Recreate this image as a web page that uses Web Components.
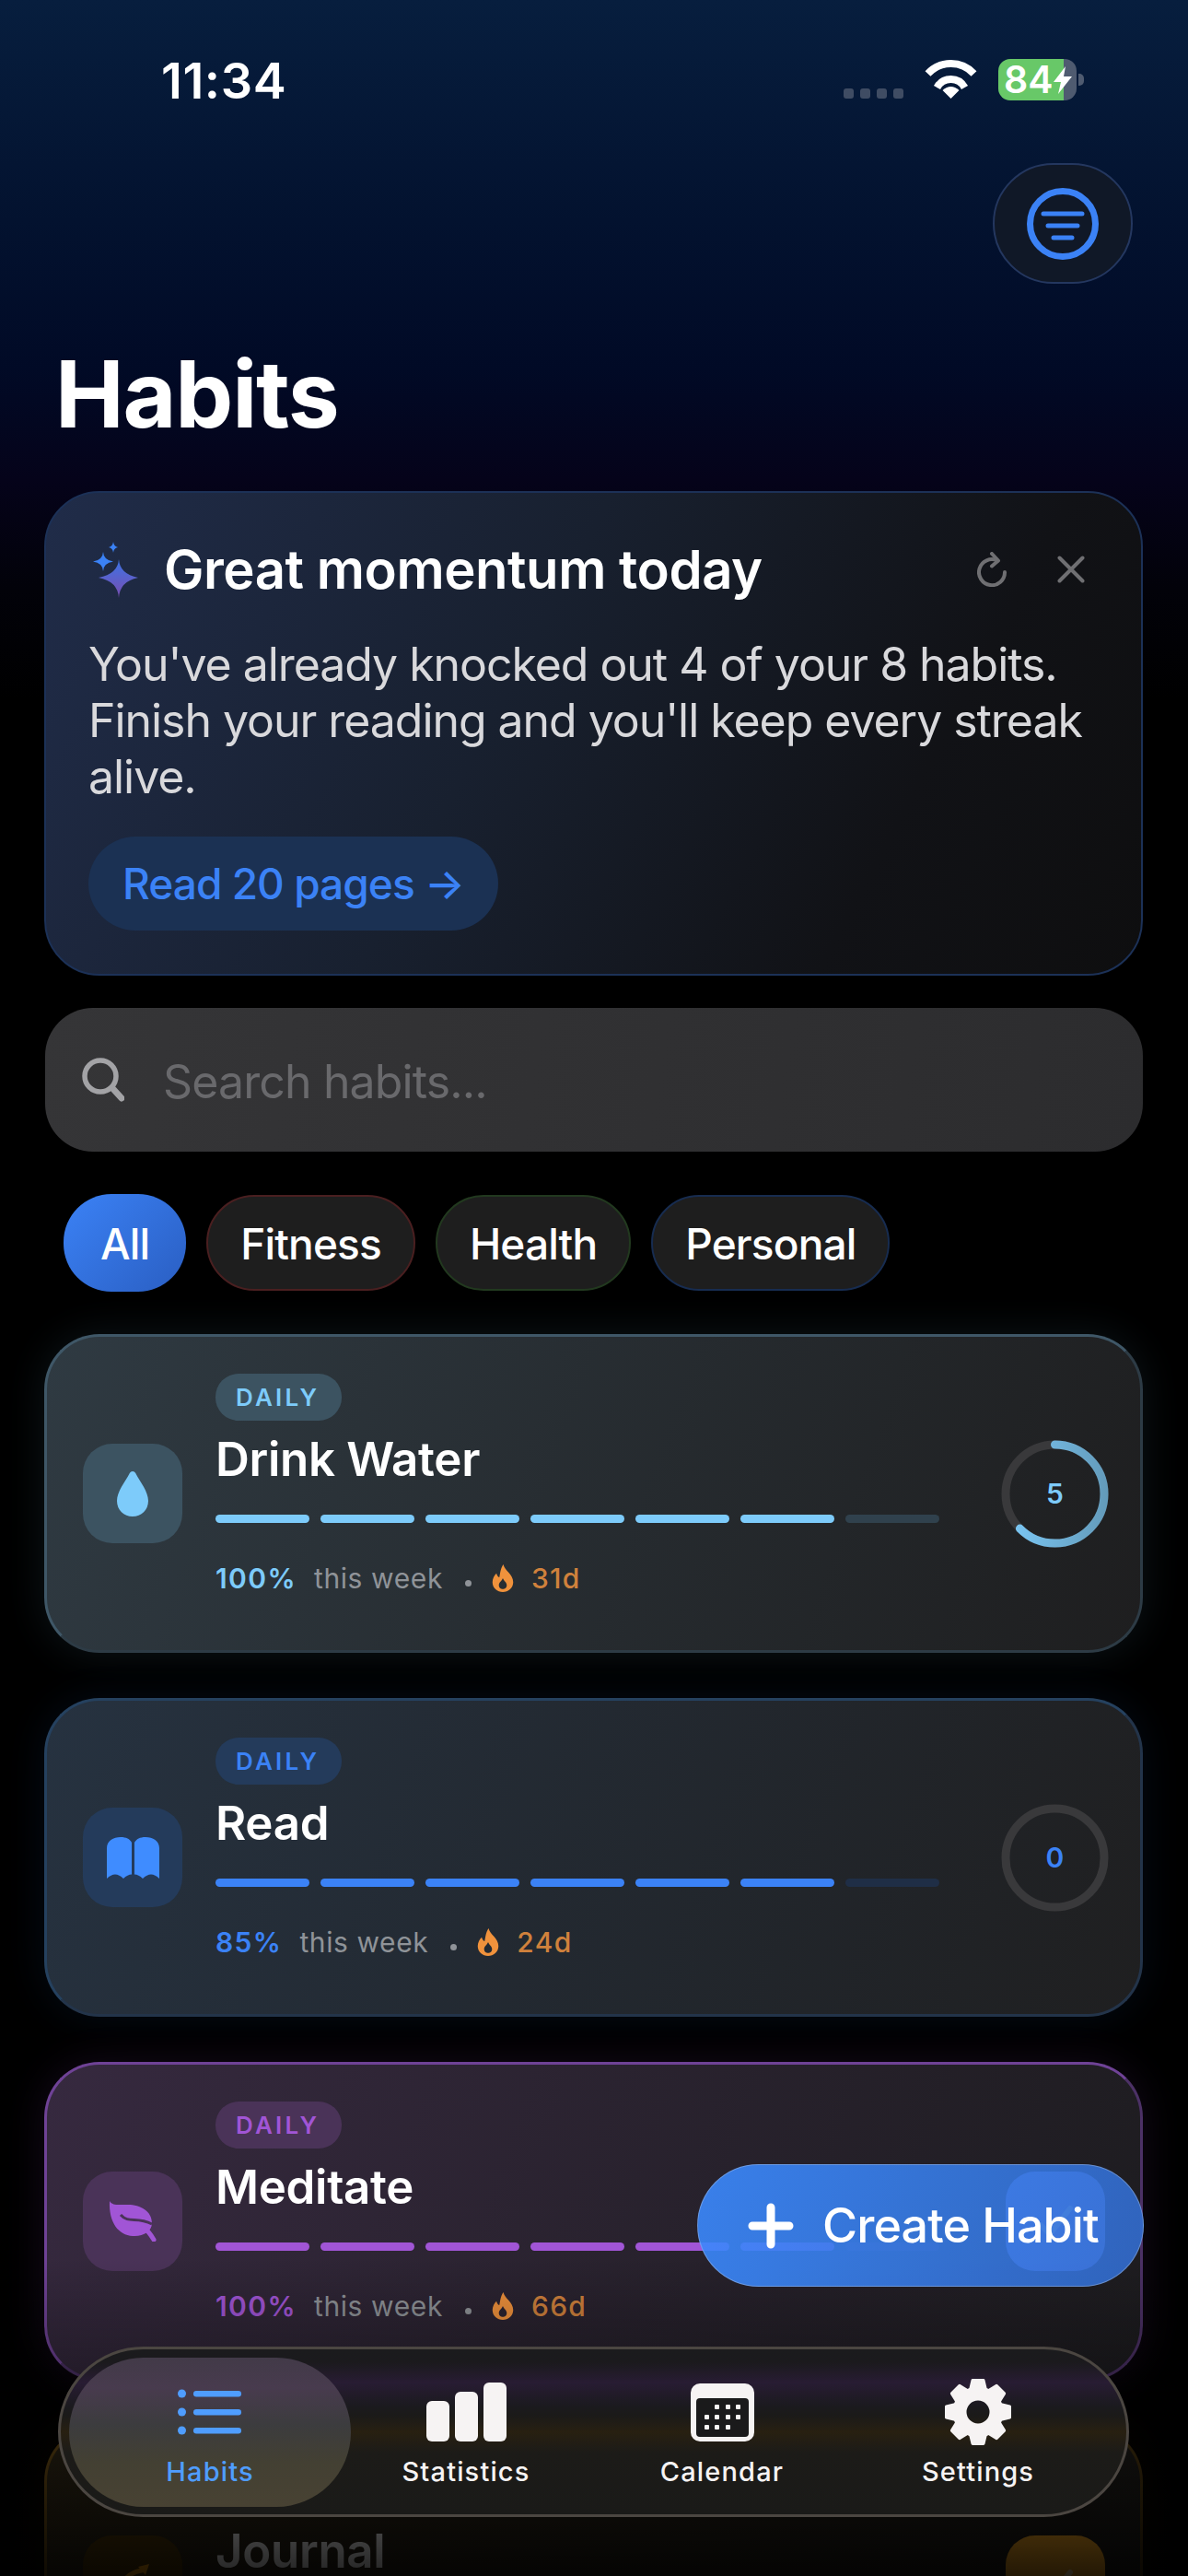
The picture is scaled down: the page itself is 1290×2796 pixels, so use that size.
<!DOCTYPE html>
<html lang="en">
<head>
<meta charset="utf-8">
<title>Habits</title>
<style>
  html, body { margin: 0; background: #000; }
  body { font-family: Inter, "Noto Sans", sans-serif; color: #fff; }
</style>
</head>
<body>
<app-shell>
  <status-bar time="11:34" battery="84"></status-bar>
  <page-header title="Habits"></page-header>

  <insight-card heading="Great momentum today" action="Read 20 pages →">
    You've already knocked out 4 of your 8 habits. Finish your reading and you'll keep every streak alive.
  </insight-card>

  <search-field placeholder="Search habits..."></search-field>

  <chip-row>
    <filter-chip active>All</filter-chip>
    <filter-chip style="--edge:#4a1f20">Fitness</filter-chip>
    <filter-chip style="--edge:#22391f">Health</filter-chip>
    <filter-chip style="--edge:#172c50">Personal</filter-chip>
  </chip-row>

  <habit-list>
    <habit-card name="Drink Water" percent="100%" streak="31d" filled="6" ring="0.625" count="5"
      style="--accent:#7dcbfa;--tile:#3c5361;--track:#30414d;--edge:#3f5767;--edge2:#2d3b45;--from:#2f3a42;--to:#1e1e1f;--glow:rgba(125,203,250,.10);--ring-end:#639ab9">
      <svg slot="icon" width="34" height="49" viewBox="0 0 34 49"><path fill="#7dcbfa" d="M17 0c2 0 3 1.500 4 3.500C25 11 34 22 34 32c0 10-7.500 17-17 17S0 42 0 32C0 22 9 11 13 3.500 14 1.500 15 0 17 0Z"/></svg>
    </habit-card>

    <habit-card name="Read" percent="85%" streak="24d" filled="6" ring="0" count="0"
      style="--accent:#3b82f6;--tile:#243b5b;--track:#1f2e46;--edge:#25415f;--edge2:#23344a;--from:#263240;--to:#1f1f20;--glow:rgba(59,130,246,.09);--ring-end:#3b82f6">
      <svg slot="icon" width="57" height="45" viewBox="0 0 57 45"><path fill="#3f8cff" d="M27 6C25 2 21 0 15 0 7 0 0 4 0 12v33c3-3 6-4.500 9-4.500s6 1.500 9 4.500c3-3 6-4.500 9-4.500V6Zm3 0c2-4 6-6 12-6 8 0 15 4 15 12v33c-3-3-6-4.500-9-4.500s-6 1.500-9 4.500c-3-3-6-4.500-9-4.500V6Z"/></svg>
    </habit-card>

    <habit-card name="Meditate" percent="100%" streak="66d" filled="6" done
      style="--accent:#a155d6;--tile:#4a3358;--track:#3d3048;--edge:#6f4296;--edge2:#4c3166;--from:#36293f;--to:#1d1c1f;--glow:rgba(161,85,214,.12);--done:#7f8cff;--check:#b4dcff">
      <svg slot="icon" width="52" height="44" viewBox="0 0 52 44"><path fill="#a155d6" d="M1 0C4 5 10 4 18 4c15-1 29 6 29 20 0 9-10 15-21 14C11 37 0 24 1 0Z"/><path fill="none" stroke="#4a3358" stroke-width="3" d="M13 15c9 10 17 1 34 10"/><path fill="none" stroke="#a155d6" stroke-width="5" stroke-linecap="round" d="M38 29c5 3 8 8 11 13"/></svg>
    </habit-card>

    <habit-card name="Journal" filled="6" done
      style="--accent:#f59e0b;--tile:#4f3708;--track:#3b2c10;--edge:#6a4c14;--edge2:#4a3610;--from:#2f2716;--to:#1c1b19;--glow:rgba(245,158,11,.06);--done:#fbaa22;--check:#ffe2a8">
      <svg slot="icon" width="48" height="48" viewBox="0 0 48 48"><path fill="none" stroke="#f59e0b" stroke-width="5" stroke-linecap="round" d="M6 40C8 24 18 10 34 8"/><path fill="#f59e0b" d="M30 4l12-3-4 12Z"/></svg>
    </habit-card>
  </habit-list>

  <create-fab slot="overlay">Create Habit</create-fab>

  <tab-bar slot="overlay">
    <tab-item active label="Habits">
      <svg width="70" height="50" viewBox="0 0 70 50" fill="#4f9dff"><circle cx="4.500" cy="5" r="4.500"/><circle cx="4.500" cy="25" r="4.500"/><circle cx="4.500" cy="45" r="4.500"/><rect x="17" y="2" width="52" height="6.500" rx="3.200"/><rect x="17" y="22" width="52" height="6.500" rx="3.200"/><rect x="17" y="42" width="52" height="6.500" rx="3.200"/></svg>
    </tab-item>
    <tab-item label="Statistics">
      <svg width="87" height="64" viewBox="0 0 87 64" fill="#f6f3f3"><rect x="0" y="20" width="25" height="44" rx="6"/><rect x="31" y="10" width="25" height="54" rx="6"/><rect x="62" y="0" width="25" height="64" rx="6"/></svg>
    </tab-item>
    <tab-item label="Calendar">
      <svg width="69" height="63" viewBox="0 0 69 63"><rect width="69" height="63" rx="10" fill="#f6f3f3"/><rect x="6" y="16" width="57" height="42" rx="4" fill="#1a1a1b"/><g fill="#f6f3f3"><rect x="26" y="23" width="5" height="5" rx="1"/><rect x="38" y="23" width="5" height="5" rx="1"/><rect x="49" y="23" width="5" height="5" rx="1"/><rect x="15" y="34" width="5" height="5" rx="1"/><rect x="26" y="34" width="5" height="5" rx="1"/><rect x="38" y="34" width="5" height="5" rx="1"/><rect x="49" y="34" width="5" height="5" rx="1"/><rect x="15" y="45" width="5" height="5" rx="1"/><rect x="26" y="45" width="5" height="5" rx="1"/><rect x="38" y="45" width="5" height="5" rx="1"/></g></svg>
    </tab-item>
    <tab-item label="Settings">
      <svg width="72" height="72" viewBox="-36 -36 72 72" fill="#f6f3f3"><circle r="20" fill="none" stroke="#f6f3f3" stroke-width="15"/><g stroke="#f6f3f3" stroke-width="3" stroke-linejoin="round"><path d="M-6 -34.500H6L9 -22H-9Z"/><path transform="rotate(45)" d="M-6 -34.500H6L9 -22H-9Z"/><path transform="rotate(90)" d="M-6 -34.500H6L9 -22H-9Z"/><path transform="rotate(135)" d="M-6 -34.500H6L9 -22H-9Z"/><path transform="rotate(180)" d="M-6 -34.500H6L9 -22H-9Z"/><path transform="rotate(225)" d="M-6 -34.500H6L9 -22H-9Z"/><path transform="rotate(270)" d="M-6 -34.500H6L9 -22H-9Z"/><path transform="rotate(315)" d="M-6 -34.500H6L9 -22H-9Z"/></g></svg>
    </tab-item>
  </tab-bar>
</app-shell>

<script>
// small helper so each element just declares css + markup
function shadow(el, html) {
  el.attachShadow({ mode: 'open' });
  el.shadowRoot.innerHTML = html;
}

class AppShell extends HTMLElement {
  connectedCallback() {
    shadow(this, `
      <style>
        :host {
          display: block;
          position: relative;
          width: 1290px;
          height: 2796px;
          overflow: hidden;
          background: linear-gradient(180deg, #071e3e 0, #03122f 240px, #010a26 400px, #05031a 520px, #020209 640px, #000 760px);
        }
        .fade {
          position: absolute;
          left: 0; right: 0; bottom: 0;
          height: 346px;
          z-index: 1;
          background: linear-gradient(180deg, rgba(0,0,0,0), rgba(0,0,0,.86));
        }
      </style>
      <slot></slot>
      <div class="fade"></div>
      <slot name="overlay"></slot>
    `);
  }
}

class StatusBar extends HTMLElement {
  connectedCallback() {
    shadow(this, `
      <style>
        :host {
          display: flex;
          justify-content: space-between;
          align-items: flex-start;
          height: 177px;
          padding: 58px 113px 0 175px;
          box-sizing: border-box;
        }
        .time { font: 600 54px/60px Inter, sans-serif; color: #fff; letter-spacing: .6px; }
        .right { display: flex; align-items: flex-end; gap: 23px; margin-top: 6px; height: 45px; }
        .dots { display: flex; gap: 7px; margin-bottom: 2px; }
        .dots i { width: 11px; height: 11px; border-radius: 3px; background: #3f4c63; }
        .wifi { display: block; margin-bottom: 2px; }
        .batt { display: flex; align-items: center; gap: 2px; }
        .cell {
          position: relative;
          display: flex;
          align-items: center;
          width: 85px; height: 45px;
          border-radius: 13px;
          background: linear-gradient(90deg, #68c868 0 71px, #4f5b70 71px);
        }
        .cell span { font: 600 41px/45px Inter, sans-serif; color: #fff; padding-left: 6px; }
        .cell svg { position: absolute; left: 60px; top: 8px; }
        .nub { width: 6px; height: 13px; border-radius: 0 5px 5px 0; background: #4f5b70; }
      </style>
      <div class="time">${this.getAttribute('time')}</div>
      <div class="right">
        <div class="dots"><i></i><i></i><i></i><i></i></div>
        <svg class="wifi" width="57" height="42" viewBox="0 0 57 42" fill="none" stroke="#fff" stroke-width="8">
          <path d="M3.500 15A34 34 0 0 1 53.500 15"/>
          <path d="M13.500 30A17 17 0 0 1 43.500 30"/>
          <path fill="#fff" stroke="none" d="M28.500 42 19.500 33Q28.500 25 37.500 33Z"/>
        </svg>
        <div class="batt">
          <div class="cell">
            <span>${this.getAttribute('battery')}</span>
            <svg width="20" height="30" viewBox="0 0 20 30"><path fill="#fff" d="M13 0 0 17h8L5 30l15-19h-9Z"/></svg>
          </div>
          <div class="nub"></div>
        </div>
      </div>
    `);
  }
}

class PageHeader extends HTMLElement {
  connectedCallback() {
    shadow(this, `
      <style>
        :host { display: block; padding: 0 60px 50px 60px; }
        .row { display: flex; justify-content: flex-end; margin-bottom: 65px; }
        .filter {
          display: flex;
          align-items: center;
          justify-content: center;
          width: 152px; height: 131px;
          box-sizing: border-box;
          border-radius: 66px;
          border: 2px solid #24375f;
          background: #101827;
        }
        h1 { margin: 0; font: 700 100px/110px Inter, sans-serif; letter-spacing: -1.2px; color: #fff; }
      </style>
      <div class="row">
        <div class="filter">
          <svg width="78" height="78" viewBox="0 0 78 78" fill="none" stroke="#3b82f6" stroke-linecap="round">
            <circle cx="39" cy="39" r="35.500" stroke-width="7"/>
            <path stroke-width="5" d="M18 28H60M23 41H55M29 54H49"/>
          </svg>
        </div>
      </div>
      <h1>${this.getAttribute('title')}</h1>
    `);
  }
}

class InsightCard extends HTMLElement {
  connectedCallback() {
    shadow(this, `
      <style>
        :host {
          display: block;
          height: 526px;
          margin: 0 49px 35px 48px;
          padding: 43px 44px 0 46px;
          box-sizing: border-box;
          border-radius: 60px;
          border: 2.500px solid #1c3157;
          background:
            linear-gradient(118deg, #202c49 0%, #18202f 42%, #111216 76%, #0e0e0f 100%);
        }
        .head { display: flex; align-items: center; height: 80px; }
        .spark { width: 60px; height: 66px; margin-right: 22px; flex: none; }
        h2 { flex: 1; margin: 0; font: 600 58px/70px Inter, sans-serif; letter-spacing: -.45px; color: #fff; }
        .tools { display: flex; align-items: center; gap: 55px; margin-right: 17px; }
        p { margin: 33px 0 0; font: 400 50px/61px Inter, sans-serif; letter-spacing: -1.050px; color: #d9d9dc; }
        .cta {
          display: inline-flex;
          align-items: center;
          height: 102px;
          margin-top: 34px;
          padding: 0 37px;
          border-radius: 51px;
          background: #1b3153;
          font: 500 46px/56px Inter, sans-serif;
          letter-spacing: -.95px;
          color: #3b82f6;
        }
      </style>
      <div class="head">
        <svg class="spark" viewBox="0 0 60 66">
          <defs><linearGradient id="g" x1="0" y1="0" x2="0" y2="1"><stop offset="0" stop-color="#3b74e6"/><stop offset="1" stop-color="#7a4db0"/></linearGradient></defs>
          <path fill="url(#g)" d="M33 22Q34 38 54 42 34 46 33 64 32 46 11 42 32 38 33 22Z"/>
          <path fill="#3b82f6" d="M16 14Q16.500 23 27 24.500 16.500 26 16 35 15.500 26 5 24.500 15.500 23 16 14Z"/>
          <path fill="#3b82f6" d="M27 3Q27.500 8 32 9 27.500 10 27 15 26.500 10 22 9 26.500 8 27 3Z"/>
        </svg>
        <h2>${this.getAttribute('heading')}</h2>
        <div class="tools">
          <svg width="32" height="38" viewBox="0 0 32 38" fill="none" stroke="#6f6f72" stroke-width="4" stroke-linecap="round" stroke-linejoin="round">
            <path d="M22 9.500A14 14 0 1 0 30 22"/><path d="M16 2l7 7.500-7 6"/>
          </svg>
          <svg width="30" height="30" viewBox="0 0 30 30" fill="none" stroke="#6f6f72" stroke-width="4" stroke-linecap="round">
            <path d="M2.500 2.500 27.500 27.500M27.500 2.500 2.500 27.500"/>
          </svg>
        </div>
      </div>
      <p><slot></slot></p>
      <div class="cta">${this.getAttribute('action')}</div>
    `);
  }
}

class SearchField extends HTMLElement {
  connectedCallback() {
    shadow(this, `
      <style>
        :host {
          display: flex;
          align-items: center;
          height: 156px;
          margin: 0 49px 46px;
          padding-left: 40px;
          box-sizing: border-box;
          border-radius: 52px;
          background: linear-gradient(100deg, #353537, #2c2c2e);
        }
        svg { flex: none; margin-right: 42px; }
        span { font: 400 50px/60px Inter, sans-serif; color: #69696c; letter-spacing: -.87px; padding-top: 4px; }
      </style>
      <svg width="46" height="48" viewBox="0 0 46 48" fill="none" stroke="#a3a3a6" stroke-width="5.500" stroke-linecap="round">
        <circle cx="20" cy="20" r="17"/><path stroke-width="7" d="M33 33 43 44"/>
      </svg>
      <span>${this.getAttribute('placeholder')}</span>
    `);
  }
}

class ChipRow extends HTMLElement {
  connectedCallback() {
    shadow(this, `
      <style>
        :host { display: flex; align-items: center; gap: 22px; height: 106px; margin: 0 0 46px 69px; }
      </style>
      <slot></slot>
    `);
  }
}

class FilterChip extends HTMLElement {
  connectedCallback() {
    shadow(this, `
      <style>
        :host {
          display: flex;
          align-items: center;
          height: 104px;
          padding: 2px 35px 0;
          box-sizing: border-box;
          border-radius: 52px;
          border: 2.500px solid var(--edge, transparent);
          background: #1e1e1e;
          font: 500 46px/56px Inter, sans-serif;
          letter-spacing: -.85px;
          color: #fff;
        }
        :host([active]) {
          height: 106px;
          padding: 2px 40px 0;
          border: 0;
          background: linear-gradient(135deg, #3b82f6, #2a5ec2);
        }
      </style>
      <slot></slot>
    `);
  }
}

class HabitList extends HTMLElement {
  connectedCallback() {
    shadow(this, `
      <style>
        :host { display: flex; flex-direction: column; gap: 49px; margin: 0 49px 0 48px; }
      </style>
      <slot></slot>
    `);
  }
}

class SegmentBar extends HTMLElement {
  connectedCallback() {
    const filled = +this.getAttribute('filled');
    let cells = '';
    for (let i = 0; i < 7; i++) cells += `<i class="${i < filled ? 'on' : ''}"></i>`;
    shadow(this, `
      <style>
        :host { display: flex; gap: 12px; width: 786px; height: 9px; }
        i { flex: 1; border-radius: 5px; background: var(--track); }
        i.on { background: var(--accent); }
      </style>
      ${cells}
    `);
  }
}

class ProgressRing extends HTMLElement {
  connectedCallback() {
    const value = +this.getAttribute('value');
    const full = 2 * Math.PI * 53.5;
    const arc = value > 0
      ? `<circle cx="58.500" cy="58.500" r="53.500" fill="none" stroke="url(#r)" stroke-width="9" stroke-linecap="round"
           stroke-dasharray="${full * value} ${full}" transform="rotate(-90 58.500 58.500)"/>`
      : '';
    shadow(this, `
      <style>
        :host { position: relative; display: block; width: 117px; height: 117px; flex: none; }
        svg { display: block; }
        span {
          position: absolute; inset: 0;
          display: flex; align-items: center; justify-content: center;
          font: 600 30px/36px Inter, sans-serif;
          color: var(--accent);
        }
      </style>
      <svg width="117" height="117" viewBox="0 0 117 117">
        <defs><linearGradient id="r" gradientUnits="userSpaceOnUse" x1="0" y1="0" x2="0" y2="117"><stop offset="0" stop-color="var(--accent)"/><stop offset="1" stop-color="var(--ring-end)"/></linearGradient></defs>
        <circle cx="58.500" cy="58.500" r="53.500" fill="none" stroke="#39393b" stroke-width="9"/>
        ${arc}
      </svg>
      <span>${this.getAttribute('count')}</span>
    `);
  }
}

class HabitCard extends HTMLElement {
  connectedCallback() {
    const a = n => this.getAttribute(n);
    const end = this.hasAttribute('done')
      ? `<div class="done"><svg width="40" height="40" viewBox="0 0 40 40" fill="none" stroke="var(--check)" stroke-width="6" stroke-linecap="round" stroke-linejoin="round"><path d="M4 24 14 34 36 6"/></svg></div>`
      : `<progress-ring value="${a('ring')}" count="${a('count')}"></progress-ring>`;
    // the last card runs off the screen and its badge sits behind the tab bar, so no stats or label for it
    const full = !!a('percent');
    const meta = full ? `
        <div class="meta">
          <span class="pct">${a('percent')}</span>
          <span class="week">this week</span>
          <i class="sep"></i>
          <svg class="flame" width="26" height="30" viewBox="0 0 23 28"><path fill="#f0923c" fill-rule="evenodd" d="M12 0c1 6 10 10 10 18 0 6-5 10-10.500 10S1 24 1 18c0-4 2-7 4-9 1 3 2 4 3 4 1-4 1-9 4-13ZM11.500 14c1 3 4 4 4 7 0 3-2 4-4 4s-4-1-4-4c0-3 3-4 4-7Z"/></svg>
          <span class="streak">${a('streak')}</span>
        </div>` : '';
    shadow(this, `
      <style>
        :host {
          display: flex;
          align-items: center;
          height: 346px;
          flex: none;
          padding: 0 35px 0 39px;
          box-sizing: border-box;
          border-radius: 60px;
          border: 3px solid;
          border-color: var(--edge) var(--edge2) var(--edge2) var(--edge);
          background: linear-gradient(110deg, var(--from), var(--to));
          box-shadow: 0 0 44px var(--glow);
        }
        .tile, .done {
          display: flex; align-items: center; justify-content: center;
          width: 108px; height: 108px;
          flex: none;
          border-radius: 32px;
        }
        .tile { background: var(--tile); margin-right: 36px; }
        .done { background: var(--done); margin-left: 72px; }
        .body { flex: none; width: 786px; height: 340px; padding-top: 40px; box-sizing: border-box; }
        .badge {
          display: inline-flex;
          align-items: center;
          height: 51px;
          min-width: 137px;
          padding: 0 22px;
          box-sizing: border-box;
          border-radius: 25px;
          background: var(--tile);
          font: 600 26px/30px Inter, sans-serif;
          letter-spacing: 3.200px;
          color: var(--accent);
          vertical-align: top;
        }
        h3 { margin: 12px 0 30px; font: 600 51px/60px Inter, sans-serif; letter-spacing: -.3px; color: #fff; }
        .meta { display: flex; align-items: center; height: 36px; margin-top: 42px; font: 400 30px/36px Inter, sans-serif; letter-spacing: .6px; }
        .pct { font-weight: 600; letter-spacing: 1.400px; color: var(--accent); margin-right: 19px; }
        .week { color: #8f9398; }
        .sep { width: 7px; height: 7px; border-radius: 50%; background: #8f9398; margin: 10px 21px 0 24px; }
        .flame { margin-right: 18px; }
        .streak { color: #d0813c; font-weight: 500; letter-spacing: 1.300px; }
        progress-ring { margin-left: 67px; }
      </style>
      <div class="tile"><slot name="icon"></slot></div>
      <div class="body">
        <div class="badge">${full ? 'DAILY' : ''}</div>
        <h3>${a('name')}</h3>
        <segment-bar filled="${a('filled')}"></segment-bar>
        ${meta}
      </div>
      ${end}
    `);
  }
}

class CreateFab extends HTMLElement {
  connectedCallback() {
    shadow(this, `
      <style>
        :host {
          position: absolute;
          left: 757px; top: 2349px;
          z-index: 2;
          display: flex;
          align-items: center;
          width: 485px; height: 133px;
          padding-left: 54px;
          box-sizing: border-box;
          border-radius: 67px;
          border: 1.500px solid rgba(190,205,230,.38);
          background: linear-gradient(110deg, rgba(60,138,255,.9), rgba(50,108,205,.9));
          font: 500 52px/60px Inter, sans-serif;
          letter-spacing: -.9px;
          color: #fff;
        }
        svg { margin-right: 31px; flex: none; }
      </style>
      <svg width="50" height="50" viewBox="0 0 50 50" stroke="#fff" stroke-width="9" stroke-linecap="round"><path d="M25 5V45M5 25H45"/></svg>
      <slot></slot>
    `);
  }
}

class TabBar extends HTMLElement {
  connectedCallback() {
    shadow(this, `
      <style>
        :host {
          position: absolute;
          left: 63px; top: 2547px;
          z-index: 3;
          display: grid;
          grid-template-columns: repeat(4, 278px);
          width: 1163px; height: 185px;
          padding: 9px 0 9px 23px;
          box-sizing: border-box;
          border-radius: 93px;
          border: 3px solid #4b4641;
          background: linear-gradient(180deg, #1b1b1d 0, #1b1a1d 14px, #281c33 36px, #1b1a1e 62px, #1b1a19 72px, #282011 90px, #1c1b18 112px, #1a1a18 100%);
        }
      </style>
      <slot></slot>
    `);
  }
}

class TabItem extends HTMLElement {
  connectedCallback() {
    shadow(this, `
      <style>
        :host {
          display: flex;
          flex-direction: column;
          align-items: center;
          height: 162px;
          padding-top: 23px;
          box-sizing: border-box;
          font: 500 29px/36px Inter, sans-serif;
          letter-spacing: 1.150px;
          color: #f6f3f3;
        }
        :host([active]) {
          margin: 0 -14px;
          border-radius: 81px;
          color: #4f9dff;
          background: linear-gradient(180deg, #423a48 0, #483b4e 20%, #3c3c3e 45%, #434033 70%, #484233 100%);
        }
        .icon { display: flex; align-items: center; justify-content: center; height: 72px; margin-bottom: 11px; }
        svg { display: block; }
      </style>
      <div class="icon"><slot></slot></div>
      <span>${this.getAttribute('label')}</span>
    `);
  }
}

customElements.define('app-shell', AppShell);
customElements.define('status-bar', StatusBar);
customElements.define('page-header', PageHeader);
customElements.define('insight-card', InsightCard);
customElements.define('search-field', SearchField);
customElements.define('chip-row', ChipRow);
customElements.define('filter-chip', FilterChip);
customElements.define('habit-list', HabitList);
customElements.define('segment-bar', SegmentBar);
customElements.define('progress-ring', ProgressRing);
customElements.define('habit-card', HabitCard);
customElements.define('create-fab', CreateFab);
customElements.define('tab-bar', TabBar);
customElements.define('tab-item', TabItem);
</script>
</body>
</html>
